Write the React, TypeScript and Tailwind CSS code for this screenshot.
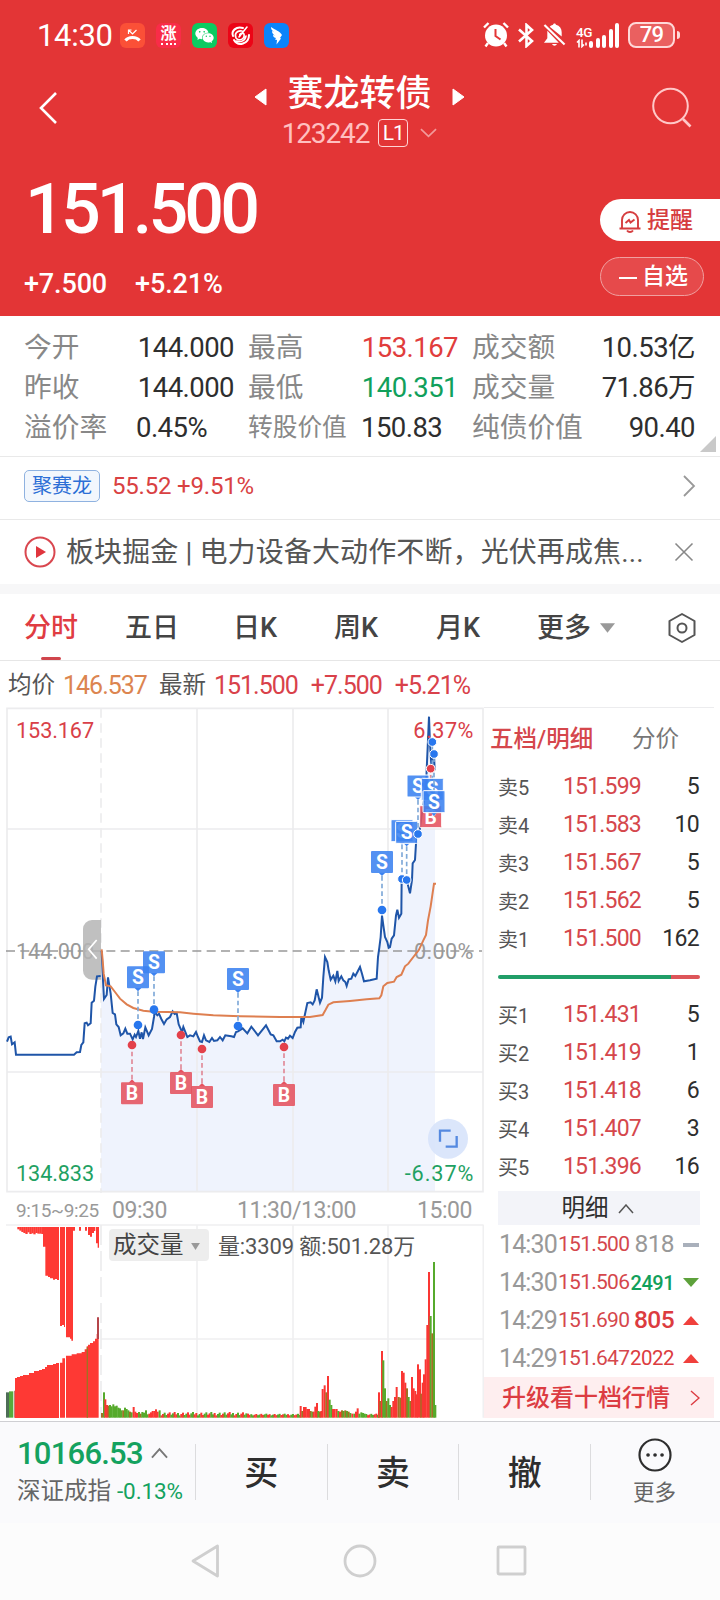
import type { ReactNode } from "react";
import { MdPhoneMissed } from "react-icons/md";
import { AiFillWechat } from "react-icons/ai";

type Point = [number, number];
type Marker = { type: "S" | "B"; x: number; y: number; dot: number };

// Chart coordinates: three units per pixel
const preLine: Point[] = [
  [21, 1004], [26, 991], [32, 989], [36, 1012], [44, 1006], [48, 1043], [222, 1043], [230, 1036], [240, 1035], [244, 1014],
  [250, 1006], [254, 949], [260, 947], [264, 955], [272, 949], [275, 887], [282, 881], [286, 839], [291, 808], [302, 807],
];

const priceLine: Point[] = [
  [305, 732], [309, 820], [312, 876], [320, 864], [324, 811], [332, 860], [338, 918], [345, 922], [349, 952], [356, 960],
  [362, 985], [370, 979], [376, 965], [382, 980], [390, 980], [398, 997], [404, 983], [408, 990], [415, 972], [420, 995],
  [425, 976], [429, 996], [436, 961], [446, 985], [456, 966], [462, 930], [464, 915], [472, 925], [477, 920], [484, 936],
  [492, 951], [500, 937], [510, 930], [518, 913], [524, 921], [530, 918], [536, 952], [546, 975], [550, 960], [562, 990],
  [570, 985], [580, 988], [588, 975], [594, 990], [600, 1003], [606, 1005], [612, 985], [618, 1000], [628, 1005], [636, 993],
  [642, 1002], [652, 1000], [660, 990], [668, 1000], [676, 985], [684, 986], [694, 988], [702, 990], [708, 975], [714, 973],
  [728, 964], [742, 979], [754, 959], [774, 985], [798, 955], [812, 982], [820, 985], [830, 1003], [840, 1003], [848, 998],
  [853, 1003], [858, 992], [864, 995], [870, 986], [878, 993], [885, 975], [892, 962], [902, 961], [904, 930], [910, 945],
  [922, 888], [932, 886], [938, 892], [944, 880], [950, 847], [960, 887], [966, 872], [970, 810], [975, 750], [982, 765],
  [986, 790], [992, 818], [1000, 806], [1006, 823], [1012, 792], [1016, 822], [1024, 808], [1030, 820], [1036, 825],
  [1040, 837], [1046, 817], [1054, 815], [1060, 800], [1066, 807], [1080, 780], [1086, 800], [1092, 823], [1110, 820],
  [1130, 815], [1134, 750], [1138, 722], [1142, 690], [1146, 626], [1150, 655], [1155, 690], [1162, 705], [1166, 722],
  [1170, 720], [1175, 695], [1182, 685], [1188, 625], [1192, 608], [1197, 632], [1204, 620], [1205, 514], [1220, 519],
  [1230, 559], [1236, 519], [1238, 469], [1245, 459], [1248, 409], [1254, 384], [1260, 364], [1265, 324], [1272, 279],
  [1278, 240], [1280, 189], [1284, 99], [1287, 29], [1290, 109], [1295, 189], [1298, 149], [1302, 141], [1304, 190],
];

const avgLine: Point[] = [
  [305, 727], [308, 760], [311, 800], [318, 835], [332, 838], [345, 855], [360, 875], [380, 892], [400, 903], [430, 911],
  [460, 914], [540, 916], [580, 920], [640, 925], [720, 928], [840, 930], [930, 930], [968, 924], [976, 910], [985, 893],
  [1000, 886], [1050, 882], [1100, 877], [1138, 874], [1144, 865], [1150, 838], [1162, 828], [1182, 824], [1190, 810],
  [1204, 803], [1215, 778], [1225, 770], [1240, 750], [1256, 730], [1270, 700], [1278, 684], [1284, 640], [1292, 598],
  [1302, 530], [1308, 530],
];

const markers: Marker[] = [
  { type: "S", x: 414, y: 811, dot: 954 },
  { type: "S", x: 462, y: 766, dot: 908 },
  { type: "S", x: 714, y: 816, dot: 957 },
  { type: "B", x: 396, y: 1159, dot: 1014 },
  { type: "B", x: 543, y: 1128, dot: 984 },
  { type: "B", x: 606, y: 1170, dot: 1026 },
  { type: "B", x: 852, y: 1164, dot: 1020 },
  { type: "S", x: 1146, y: 465, dot: 609 },
  { type: "S", x: 1206, y: 371, dot: 516 },
  { type: "S", x: 1220, y: 376, dot: 519 },
  { type: "S", x: 1254, y: 237, dot: 381 },
  { type: "B", x: 1292, y: 329, dot: 185 },
  { type: "S", x: 1297, y: 247, dot: 105 },
  { type: "S", x: 1302, y: 284, dot: 141 },
];

// x, height, r = up / g = down / o = mixed
const peaks: [number, number, string][] = [
  [306, 14, "o"], [312, 76, "g"], [316, 55, "r"], [321, 38, "r"], [326, 36, "o"], [330, 38, "g"], [335, 34, "g"], [340, 40, "g"],
  [345, 34, "g"], [350, 36, "g"], [355, 30, "g"], [360, 28, "g"], [365, 22, "g"], [370, 22, "o"], [375, 30, "g"], [380, 26, "g"],
  [385, 22, "g"], [390, 18, "o"], [395, 16, "g"], [401, 32, "r"], [406, 18, "r"], [411, 14, "r"], [417, 17, "g"], [422, 12, "o"],
  [427, 17, "g"], [432, 15, "g"], [438, 22, "g"], [443, 10, "g"], [448, 12, "r"], [453, 16, "r"], [458, 20, "r"], [463, 20, "r"],
  [468, 25, "r"], [473, 18, "r"], [479, 22, "g"],
  [902, 35, "r"], [907, 20, "o"], [912, 32, "r"], [917, 32, "r"], [922, 26, "r"], [927, 26, "r"], [932, 20, "o"], [937, 18, "g"],
  [941, 18, "r"], [946, 33, "r"], [951, 44, "r"], [955, 20, "g"], [960, 18, "o"], [964, 20, "r"], [968, 86, "r"], [974, 97, "r"],
  [979, 76, "o"], [984, 125, "r"], [989, 54, "g"], [994, 38, "g"], [999, 26, "r"], [1004, 26, "r"], [1010, 26, "r"], [1015, 20, "g"],
  [1020, 18, "r"], [1026, 22, "o"], [1031, 20, "g"], [1036, 22, "o"], [1041, 20, "g"], [1046, 18, "o"], [1051, 14, "g"],
  [1057, 12, "r"], [1063, 12, "g"], [1068, 18, "r"], [1073, 28, "r"], [1078, 12, "g"], [1084, 16, "g"], [1089, 14, "g"],
  [1094, 12, "g"], [1137, 76, "r"], [1141, 50, "o"], [1146, 200, "r"], [1150, 172, "g"], [1155, 88, "g"], [1160, 50, "o"],
  [1165, 58, "g"], [1170, 38, "g"], [1175, 32, "r"], [1180, 50, "r"], [1185, 62, "r"], [1190, 92, "r"], [1196, 62, "o"],
  [1201, 60, "o"], [1206, 140, "r"], [1211, 135, "r"], [1216, 105, "r"], [1221, 88, "o"], [1226, 62, "g"], [1231, 50, "o"],
  [1236, 122, "r"], [1241, 88, "r"], [1246, 80, "r"], [1250, 70, "r"], [1254, 160, "r"], [1260, 145, "r"], [1264, 72, "o"],
  [1268, 105, "r"], [1272, 130, "r"], [1277, 175, "r"], [1282, 278, "r"], [1287, 437, "r"], [1292, 305, "g"], [1297, 253, "o"],
  [1302, 467, "g"], [1306, 38, "g"],
];

const volColors: Record<string, string> = { r: "#fa3633", g: "#56aa2c", o: "#a27023" };

const toPoints = (pts: Point[]) => pts.map((p) => p.join(",")).join(" ");

const preVolume = [45, 52, 60, 68, 76, 86, 94, 103, 110, 118, 126, 134, 142, 150, 158, 168];
const preVolumeTop = [463, 460, 456, 454, 454, 446, 446, 442, 442, 438, 434, 430, 424, 424, 420, 416];
const preDrops = [16, 20, 24, 27, 30, 25, 30, 28, 31, 27, 29, 29, 30];

const stats: { label: string; value: string; color?: string; left?: boolean; small?: boolean }[] = [
  { label: "今开", value: "144.000" },
  { label: "最高", value: "153.167", color: "text-[#e13d3c]" },
  { label: "成交额", value: "10.53亿" },
  { label: "昨收", value: "144.000" },
  { label: "最低", value: "140.351", color: "text-[#11a05b]" },
  { label: "成交量", value: "71.86万" },
  { label: "溢价率", value: "0.45%", left: true },
  { label: "转股价值", value: "150.83", left: true, small: true },
  { label: "纯债价值", value: "90.40" },
];

const sells = [["卖5", "151.599", "5"], ["卖4", "151.583", "10"], ["卖3", "151.567", "5"], ["卖2", "151.562", "5"], ["卖1", "151.500", "162"]];
const buys = [["买1", "151.431", "5"], ["买2", "151.419", "1"], ["买3", "151.418", "6"], ["买4", "151.407", "3"], ["买5", "151.396", "16"]];

const ticks = [
  { time: "14:30", price: "151.500", qty: "818", dir: "flat", style: "text-[24.500px] text-[#999]" },
  { time: "14:30", price: "151.506", qty: "2491", dir: "down", style: "text-[20px] font-medium text-[#11a05b]" },
  { time: "14:29", price: "151.690", qty: "805", dir: "up", style: "text-[24.500px] font-medium text-[#dc3c3f]" },
  { time: "14:29", price: "151.647", qty: "2022", dir: "up", style: "text-[20.500px] text-[#dc3c3f]" },
];

function AppBadge({ className, children }: { className: string; children?: ReactNode }) {
  return <div className={`flex size-[25px] items-center justify-center overflow-hidden rounded-[6px] text-white ${className}`}>{children}</div>;
}

function StatusBar() {
  return (
    <div className="flex h-[70px] items-center pl-[37px] pr-[40px] text-white">
      <span className="w-[83px] text-[31px] leading-none tracking-[-0.01em]">14:30</span>
      <div className="flex gap-[11px]">
        <AppBadge className="bg-[#fb5037]">
          <svg viewBox="0 0 25 25" className="size-[25px]" fill="none" stroke="white">
            <path d="M5.500 17.500c3-4 11-4 14 0" strokeWidth="3" />
            <path d="M8.500 11V7h3M8.500 7l4 4 4-4" strokeWidth="1.200" />
          </svg>
        </AppBadge>
        <AppBadge className="flex-col bg-[#f92c48] leading-none">
          <span className="text-[16px] font-bold leading-[16px]">涨</span>
          <span className="h-[3px] w-[15px] border-b-2 border-dotted border-white" />
        </AppBadge>
        <AppBadge className="bg-[#0bcb61]"><AiFillWechat className="size-[21px]" /></AppBadge>
        <AppBadge className="bg-[#ec0416]">
          <svg viewBox="0 0 25 25" className="size-[25px]" fill="none" stroke="white" strokeLinecap="round">
            <path d="M15 5C8 3 3 8 5 13M6 17c4 7 15 4 15-5" strokeWidth="2" />
            <path d="M14 8c-5-1-8 3-6 7 3 4 9 1 8-4-2-2-5 0-4 2M19 4l-8 10M8 18c4 2 9 0 10-5" strokeWidth="1.600" />
          </svg>
        </AppBadge>
        <AppBadge className="bg-[#0b84fa]">
          <svg viewBox="0 0 25 25" className="size-[25px]" fill="white">
            <path d="M7 4c4 3 9 4 11 8l-2 3 1 .5-4.500 6 .5-4.500-2-.5 1-1.500C9.500 14.500 9 13 9 12l2 .5C8.500 11 8 9.500 8 8l2 .8C7.800 7.500 7 6 7 4z" />
          </svg>
        </AppBadge>
      </div>
      <div className="ml-auto flex items-center">
        <svg viewBox="0 0 26 26" className="size-[26px]" fill="none" stroke="white">
          <circle cx="13" cy="13.500" r="11" fill="white" stroke="none" />
          <path d="M1 5.500L5.500 1M20.500 1L25 5.500M5 21l-2.500 3.500M21 21l2.500 3.500" strokeWidth="2.400" />
          <path d="M12.500 7v7l5 3.500" stroke="#e33536" strokeWidth="2" />
        </svg>
        <svg viewBox="0 0 16 25" className="ml-[9px] h-[25px] w-[16px]" fill="none" stroke="white" strokeWidth="2.600">
          <path d="M1 6.500L14 18l-5.500 5V2L14 7 1 18.500" />
        </svg>
        <svg viewBox="0 0 24 26" className="ml-[9px] h-[26px] w-[23px]" fill="white">
          <path d="M7 4.500C8.500 3 10 2.600 10.500 2.400 10.800.6 13.200.6 13.500 2.400 17.500 3.500 19.500 6.500 19.500 10v4.500zM4.500 8.500L16.500 21H1l3.500-4.500zM9.500 22.500h5c-.8 2.400-4.200 2.400-5 0z" />
          <path d="M1.500 2.500l21 20.500" stroke="white" strokeWidth="2.200" />
        </svg>
        <div className="ml-[10px] flex h-[26px] w-[44px] items-end">
          <div className="flex w-[13px] flex-col text-[13.500px] font-medium leading-[14px] tracking-[-0.04em]">
            <span>4G</span>
            <svg viewBox="0 0 12 8" className="h-[9px] w-[12px]" fill="none" stroke="white" strokeWidth="1.600"><path d="M1 3l2-2v7M6 0v7l2-2M10 3v3" /></svg>
          </div>
          <div className="flex items-end gap-[2.500px]">
            <i className="h-[7px] w-[4px] rounded-full bg-white" />
            <i className="h-[10px] w-[4px] rounded-full bg-white" />
            <i className="h-[13px] w-[4px] rounded-full bg-white" />
            <i className="h-[19px] w-[4px] rounded-full bg-white" />
            <i className="h-[25px] w-[4px] rounded-full bg-white" />
          </div>
        </div>
        <div className="ml-[8px] flex h-[26px] w-[47px] items-center justify-center rounded-[8px] border-2 border-[#ffd8d8] bg-[#ea6060] text-[22px] font-medium leading-none tracking-[-0.03em]">79</div>
        <i className="ml-[2px] h-[8px] w-[3px] rounded-r bg-[#ffd8d8]" />
      </div>
    </div>
  );
}

function Header() {
  return (
    <header className="h-[316px] bg-[#e33536] text-white">
      <StatusBar />
      <div className="flex h-[90px] justify-between pl-[38px] pr-[27px]">
        <svg viewBox="0 0 22 36" className="mt-[20px] h-[36px] w-[22px]" fill="none" stroke="white" strokeWidth="2.600"><path d="M18 3L3 18l15 15" /></svg>
        <div className="ml-[8px] flex flex-col items-center">
          <div className="flex h-[46px] items-center gap-[20px]">
            <svg viewBox="0 0 13 18" className="mt-[7px] h-[18px] w-[13px]" fill="white"><path d="M12 1v16L1 9z" stroke="white" strokeLinejoin="round" /></svg>
            <h1 className="pt-[2px] text-[36px] font-medium leading-[44px]">赛龙转债</h1>
            <svg viewBox="0 0 13 18" className="mt-[7px] h-[18px] w-[13px]" fill="white"><path d="M1 1v16l11-8z" stroke="white" strokeLinejoin="round" /></svg>
          </div>
          <div className="mt-[2px] flex h-[30px] items-center text-[#ffc0c0]">
            <span className="pt-[2px] text-[28px] leading-none tracking-[-0.04em]">123242</span>
            <span className="ml-[9px] flex h-[28px] w-[30px] items-center justify-center rounded-[4px] border border-[#ffd4d4] text-[21px] leading-none tracking-[-0.04em] text-white">L1</span>
            <svg viewBox="0 0 18 12" className="ml-[12px] h-[12px] w-[17px]" fill="none" stroke="#f29a9a" strokeWidth="1.800"><path d="M1 2l8 7.500 8-7.500" /></svg>
          </div>
        </div>
        <svg viewBox="0 0 42 42" className="mt-[17px] size-[42px]" fill="none" stroke="#ffc8c8" strokeWidth="2"><circle cx="19.500" cy="19" r="17.300" /><path d="M32 32l7.500 7.500" strokeWidth="2.600" /></svg>
      </div>
      <div className="flex justify-between">
        <div className="pl-[24px] pt-[14px]">
          <div className="ml-[1px] text-[70px] font-medium leading-[70px] tracking-[-0.055em]">151.500</div>
          <div className="mt-[25px] flex gap-[28px] text-[27px] font-medium leading-[30px] tracking-[-0.005em]">
            <span>+7.500</span>
            <span>+5.21%</span>
          </div>
        </div>
        <div className="w-[120px] pt-[39px]">
          <button className="flex h-[42px] w-[120px] items-center rounded-l-full bg-white pl-[18px] pt-[2px] text-[23px] font-medium text-[#d63d3f]">
            <svg viewBox="0 0 24 24" className="mr-[5px] size-[24px]" fill="none" stroke="#d63d3f" strokeWidth="1.900">
              <path d="M4 19V11a8 8 0 0 1 16 0v8M1.500 19.500h21" />
              <path d="M9 21.500c1.500 2 4.500 2 6 0M7.500 14l3.500-3 1.500 2.500 4-3" />
            </svg>
            提醒
          </button>
          <button className="mt-[16px] flex h-[39px] w-[104px] items-center rounded-full border border-[#f0a0a0] bg-[#e64a4b] pl-[18px] pt-[2px] text-[23px] font-medium">
            <i className="mr-[5px] h-[2px] w-[18px] bg-white" />
            自选
          </button>
        </div>
      </div>
    </header>
  );
}

function Stats() {
  return (
    <section className="relative h-[141px] border-b border-[#e9e9e9] pl-[24px] pr-[24px] pt-[12px]">
      <div className="grid grid-cols-[224px_224px_223px] leading-[40px]">
        {stats.map((s) => (
          <div key={s.label} className="flex h-[40px] items-center whitespace-nowrap">
            <span className={`text-[#888] ${s.small ? "w-[113px] text-[24.700px]" : s.left ? "w-[112px] text-[27.700px]" : "text-[27.700px]"}`}>{s.label}</span>
            <span className={`text-[27.500px] tracking-[-0.02em] ${s.left ? "" : "ml-auto"} ${s.color || "text-[#2e2e2e]"} ${s.value.length === 7 && !s.label.startsWith("成") ? "mr-[14px]" : ""}`}>
              {s.value}
            </span>
          </div>
        ))}
      </div>
      <svg viewBox="0 0 16 16" className="absolute bottom-[4px] right-[4px] size-[16px]" fill="#c9c9c9"><path d="M16 0v16H0z" /></svg>
    </section>
  );
}

function Tabs() {
  return (
    <nav className="relative flex h-[67px] items-center border-b border-[#e6e6e6] pt-[2px] text-[27px] font-medium text-[#444]">
      <span className="w-[102px] pl-[24px] text-[#e03c42]">分时</span>
      <span className="w-[107px] pl-[23px]">五日</span>
      <span className="w-[102px] pl-[24px]">日K</span>
      <span className="w-[102px] pl-[23px]">周K</span>
      <span className="w-[102px] pl-[23px]">月K</span>
      <span className="pl-[22px]">更多</span>
      <svg viewBox="0 0 16 10" className="ml-[9px] h-[10px] w-[15px]" fill="#999"><path d="M0 0h16L8 10z" /></svg>
      <svg viewBox="0 0 32 32" className="ml-[51px] size-[32px]" fill="none" stroke="#555" strokeWidth="2">
        <path d="M16 2l12.500 7v14L16 30 3.500 23V9z" strokeLinejoin="round" />
        <circle cx="16" cy="16" r="4.500" />
      </svg>
      <i className="absolute bottom-0 left-[41px] h-[3px] w-[20px] rounded bg-[#d0454c]" />
    </nav>
  );
}

function PriceChart() {
  const label = "text-[65px] tracking-[-0.005em]";
  return (
    <svg viewBox="0 0 1452 1458" className="block h-[486px] w-[484px]" fill="none">
      <polygon points={`303,1454 303,800 ${toPoints(priceLine)} 1305,200 1305,1454`} fill="#eff3fd" />
      <g stroke="#ececee" strokeWidth="5">
        <path d="M21 4H1449V1454H21zM591 4V1454M879 4V1454M1164 4V1454M21 366H1449M21 1095H1449" />
        <path d="M303 4V1458" strokeDasharray="28 17" />
      </g>
      <path d="M18 732H1446" stroke="#999" strokeWidth="5" strokeDasharray="27 16" />
      <text x="48" y="757" fill="#999" className={label}>144.000</text>
      <text x="1420" y="757" textAnchor="end" fill="#999" className={label} textLength="178">0.00%</text>
      <path d="M303 639H276a27 27 0 0 0-27 27V791a27 27 0 0 0 27 27H303z" fill="#b5b5b5" fillOpacity="0.850" />
      <path d="M290 699L266 727L290 755" stroke="white" strokeWidth="5" />
      <polyline points={toPoints(preLine)} stroke="#1f55a8" strokeWidth="6" />
      <polyline points={toPoints(priceLine)} stroke="#1f55a8" strokeWidth="6" />
      <polyline points={toPoints(avgLine)} stroke="#de7f50" strokeWidth="6" />
      <text x="48" y="92" fill="#d94048" className={label}>153.167</text>
      <text x="1420" y="92" textAnchor="end" fill="#d94048" className={label} textLength="180">6.37%</text>
      <text x="48" y="1421" fill="#1fa163" className={label}>134.833</text>
      <text x="1420" y="1421" textAnchor="end" fill="#1fa163" className={label} textLength="206">-6.37%</text>
      {markers.map((m, i) => {
        const sell = m.type === "S";
        const color = sell ? "#3b82f0" : "#e5525e";
        const edge = sell ? m.y + 42 : m.y - 42;
        return (
          <g key={i}>
            <path d={`M${m.x} ${edge}V${m.dot}`} stroke={sell ? "#7fa9d8" : "#e08a98"} strokeWidth="5" strokeDasharray="14 9" />
            <path d={`M${m.x - 10} ${sell ? m.y + 32 : m.y - 32}h20L${m.x} ${edge}z`} fill={color} />
            <rect x={m.x - 33} y={m.y - 33} width="66" height="66" rx="3" fill={color} fillOpacity="0.880" stroke={m.x > 1200 ? "#fff" : "none"} strokeWidth="3" />
            <text x={m.x} y={m.y + 21} textAnchor="middle" fill="white" className="text-[58px] font-bold">{m.type}</text>
          </g>
        );
      })}
      {markers.map((m, i) => (
        <circle key={i} cx={m.x} cy={m.dot} r="13" fill={m.type === "S" ? "#2877ee" : "#e3404a"} stroke={m.x > 1200 ? "#fff" : "none"} strokeWidth="3" />
      ))}
      <circle cx="1344" cy="1295" r="60" fill="#d7e3fb" fillOpacity="0.900" />
      <path d="M1320 1304V1271H1352M1337 1319H1370V1287" stroke="#5589e0" strokeWidth="7" />
    </svg>
  );
}

function VolumeChart() {
  // quiet stretches between the listed peaks
  const quiet: [number, number, string][] = [];
  for (let i = 0, x = 484; x < 1135; x += 5, i++) {
    if (x > 900 && x < 1097) continue;
    quiet.push([x, 7 + ((i * 37) % 11) * (x < 740 ? 1 : 0.5), ["r", "g", "o", "g", "r", "r", "g"][(i * 5 + (i >> 2)) % 7]]);
  }
  return (
    <svg viewBox="0 0 1452 582" className="block h-[194px] w-[484px]" fill="none">
      <path d="M18 3H1451M303 345H1451M591 3V581M879 3V581M1164 3V581M1450 3V581" stroke="#f0f0f1" strokeWidth="5" />
      <path d="M303 3V581" stroke="#ececee" strokeWidth="5" strokeDasharray="60 18" />
      <g fill="#fe3934">
        {preDrops.map((h, i) => <rect key={i} x={52 + i * 6} y="9" width="7" height={h - 9} />)}
        <path d="M129 9H177V168h-6v-3h-6v2h-6v-4h-9v-4h-6v-4H136V68h-7zM180 9H195V309h-3v-6h-6v3h-6zM198 9H219V350h-5v-6h-4v-4H198zM219 9h6v11h-6zM237 9h6v11h-6zM255 9h6v11h-6zM264 9h6v24h-6zM270 9h6v29h-6zM276 9h6v18h-6zM282 9h4v12h-4zM288 9h9V71h-4V58h-5z" />
        {preVolume.map((x, i) => <rect key={x} x={x} y={preVolumeTop[i]} width={(preVolume[i + 1] || 177) - x + 1} height={581 - preVolumeTop[i]} shapeRendering="crispEdges" />)}
        <path d="M180 581V416h7V403h8V581zM198 581V395h17v-4h15v-3h15v-4h9v-8h6v-9h4v-5h6v-5h9v-5h6v-8h5V330h6V581z" />
      </g>
      <path d="M18 581V505h9V581z" fill="#4e6e56" />
      <path d="M27 581V502h13V581z" fill="#56aa3c" />
      <path d="M42 581V500h2V581z" fill="#a33" />
      <path d="M260 581V370h4V581z" fill="#a27023" />
      <path d="M291 345V280h6V345z" fill="#b5454a" />
      {[...quiet, ...peaks].map(([x, h, c]) => (
        <rect key={x} x={x - 3} y={581 - h} width="6" height={h} fill={volColors[c]} />
      ))}
    </svg>
  );
}

function QuoteRow({ row }: { row: string[] }) {
  return (
    <div className="flex h-[38px] items-center pl-[14px] pr-[15px] pt-px">
      <span className="w-[65px] text-[20px] text-[#555]">{row[0]}</span>
      <span className="text-[23px] tracking-[-0.035em] text-[#d5474c]">{row[1]}</span>
      <span className="ml-auto text-[23px] tracking-[-0.03em] text-[#2e2e2e]">{row[2]}</span>
    </div>
  );
}

function Direction({ dir }: { dir: string }) {
  if (dir === "flat") return <i className="h-[4px] w-[16px] bg-[#a9b0bb]" />;
  return (
    <svg viewBox="0 0 16 9" className="h-[9px] w-[16px]" fill={dir === "up" ? "#f0403c" : "#5da13b"}>
      <path d={dir === "up" ? "M0 9L8 0l8 9z" : "M0 0h16L8 9z"} />
    </svg>
  );
}

function OrderBook() {
  return (
    <aside className="w-[230px] border-t border-[#ececee]">
      <div className="flex h-[60px] items-center pl-[6px] pt-[3px] text-[23.500px] text-[#777]">
        <span className="w-[142px] font-medium text-[#d5474c]">五档/明细</span>
        <span>分价</span>
      </div>
      {sells.map((row) => <QuoteRow key={row[0]} row={row} />)}
      <div className="flex h-[38px] items-center pl-[14px] pr-[14px]">
        <i className="h-[4px] w-[173px] rounded-l bg-[#219e68]" />
        <i className="h-[4px] flex-1 rounded-r bg-[#dd5559]" />
      </div>
      {buys.map((row) => <QuoteRow key={row[0]} row={row} />)}
      <div className="ml-[14px] mr-[14px] mt-[5px] flex h-[34px] items-center justify-center gap-[9px] bg-[#f3f4f9] pr-[3px] pt-px text-[23.500px] text-[#2e2e2e]">
        明细
        <svg viewBox="0 0 16 10" className="h-[10px] w-[16px]" fill="none" stroke="#555" strokeWidth="1.500"><path d="M1 9l7-8 7 8" /></svg>
      </div>
      {ticks.map((t) => (
        <div key={t.price} className="flex h-[38px] items-center pl-[15px] pr-[15px] pt-px">
          <span className="w-[59px] text-[25px] tracking-[-0.035em] text-[#999]">{t.time}</span>
          <span className="text-[21px] tracking-[-0.035em] text-[#d5474c]">{t.price}</span>
          <span className={`ml-auto mr-[9px] tracking-[-0.025em] ${t.style}`}>{t.qty}</span>
          <Direction dir={t.dir} />
        </div>
      ))}
      <div className="flex h-[41px] items-center justify-between bg-[#feeeef] pl-[18px] pr-[14px] pt-px text-[24px] font-medium text-[#dc3c42]">
        升级看十档行情
        <svg viewBox="0 0 10 16" className="h-[16px] w-[10px]" fill="none" stroke="#dc3c42" strokeWidth="1.400"><path d="M1 1l8 7-8 7" /></svg>
      </div>
    </aside>
  );
}

function TradeBar() {
  return (
    <footer className="flex h-[102px] border-t border-[#cfcfd3] bg-[#fafafc]">
      <div className="w-[195px] whitespace-nowrap pl-[17px] pt-[14px]">
        <div className="flex h-[34px] items-center text-[31px] font-medium leading-none tracking-[-0.025em] text-[#14a25f]">
          10166.53
          <svg viewBox="0 0 18 12" className="ml-[8px] h-[12px] w-[17px]" fill="none" stroke="#777" strokeWidth="2"><path d="M1 11l8-9 8 9" /></svg>
        </div>
        <div className="mt-[5px] flex h-[34px] items-center text-[23.500px] text-[#666]">
          深证成指<span className="ml-[6px] text-[22.500px] tracking-[-0.005em] text-[#14a25f]">-0.13%</span>
        </div>
      </div>
      {["买", "卖", "撤"].map((name) => (
        <div key={name} className="mt-[22px] h-[56px] w-[131.700px] border-l border-[#dcdcde] text-center text-[34px] font-medium leading-[59px] text-[#2e2e2e]">{name}</div>
      ))}
      <div className="mt-[22px] h-[56px] flex-1 border-l border-[#dcdcde]">
        <div className="-mt-[7px] flex flex-col items-center pr-[2px] text-[21.500px] text-[#666]">
          <svg viewBox="0 0 36 36" className="size-[36px]" fill="none" stroke="#2e2e2e" strokeWidth="2.200">
            <circle cx="18" cy="18" r="15.500" />
            <path d="M11 18h.1M18 18h.1M25 18h.1" strokeWidth="3.600" strokeLinecap="round" />
          </svg>
          <span className="mt-[5px] leading-[30px]">更多</span>
        </div>
      </div>
    </footer>
  );
}

export default function App() {
  return (
    <div className="h-[1600px] w-[720px] overflow-hidden bg-white font-['Roboto','Noto_Sans_CJK_SC',sans-serif]">
      <Header />
      <Stats />
      <div className="flex h-[63px] items-center justify-between border-b border-[#e9e9e9] pb-[4px] pl-[24px] pr-[24px]">
        <div className="flex items-center">
          <span className="mr-[12px] flex h-[32px] w-[76px] items-center justify-center rounded-[5px] border border-[#8fb2e0] bg-[#f2f7fd] text-[20px] text-[#2c6fd6]">聚赛龙</span>
          <span className="text-[24px] tracking-[-0.008em] text-[#d94142]">55.52 +9.51%</span>
        </div>
        <svg viewBox="0 0 14 22" className="h-[22px] w-[14px]" fill="none" stroke="#999" strokeWidth="1.800"><path d="M2 1l10 10L2 21" /></svg>
      </div>
      <div className="flex h-[64px] items-center pl-[24px]">
        <svg viewBox="0 0 32 32" className="size-[32px]" fill="none"><circle cx="16" cy="16" r="14.500" stroke="#d9474f" strokeWidth="2" /><path d="M12 10v12l10-6z" fill="#e0353d" /></svg>
        <span className="ml-[10px] w-[598px] whitespace-nowrap pt-[2px] text-[28px] tracking-[0.004em] text-[#555]">板块掘金 | 电力设备大动作不断，光伏再成焦...</span>
        <svg viewBox="0 0 20 20" className="ml-[10px] size-[20px]" fill="none" stroke="#888" strokeWidth="1.600"><path d="M1.500 1.500l17 17M18.500 1.500l-17 17" /></svg>
      </div>
      <div className="h-[10px] bg-[#f7f7f8]" />
      <Tabs />
      <div className="flex h-[46px] items-center pl-[8px] pt-[3px] text-[25px] tracking-[-0.04em] text-[#d9414a]">
        <span className="text-[23.500px] tracking-normal text-[#555]">均价</span>
        <span className="ml-[8px] text-[#dc8550]">146.537</span>
        <span className="ml-[12px] text-[23.500px] tracking-normal text-[#555]">最新</span>
        <span className="ml-[8px]">151.500</span>
        <span className="ml-[13px]">+7.500</span>
        <span className="ml-[13px]">+5.21%</span>
      </div>
      <main className="flex h-[714px]">
        <div className="w-[484px]">
          <PriceChart />
          <div className="flex h-[31px] items-center pt-[3px] text-[23px] leading-none tracking-[-0.02em] text-[#999]">
            <span className="w-[96px] pl-[16px] text-[19px] tracking-[-0.02em]">9:15~9:25</span>
            <span className="ml-[16px] w-[125px]">09:30</span>
            <span>11:30/13:00</span>
            <span className="ml-auto mr-[12px]">15:00</span>
          </div>
          <div className="relative">
            <VolumeChart />
            <div className="absolute left-[109px] top-[5px] flex h-[32px] items-center text-[22px] tracking-[-0.006em] text-[#555]">
              <span className="mr-[9px] flex h-[32px] w-[100px] items-center rounded bg-[#ededed] pl-[4px] pt-[2px] text-[23.500px] tracking-normal text-[#444]">
                成交量
                <svg viewBox="0 0 10 8" className="ml-[6px] h-[7px] w-[11px]" fill="#999"><path d="M0 0h10L5 8z" /></svg>
              </span>
              <span className="pt-[2px]">量:3309 额:501.28万</span>
            </div>
          </div>
        </div>
        <OrderBook />
      </main>
      <TradeBar />
      <div className="flex h-[77px] justify-center bg-[#fcfcfc] pt-[20px]">
        <svg viewBox="0 0 340 36" className="h-[36px] w-[340px]" fill="none" stroke="#cfcfcf" strokeWidth="2.800" strokeLinejoin="round">
          <path d="M27.500 3v30L3 18z" />
          <circle cx="170" cy="18" r="15" />
          <rect x="308" y="4" width="27" height="27" rx="1" />
        </svg>
      </div>
    </div>
  );
}
